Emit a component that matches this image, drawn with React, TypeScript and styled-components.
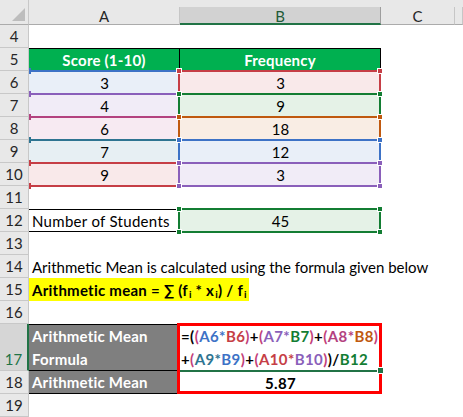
import React from 'react';
import styled, { createGlobalStyle, css } from 'styled-components';

type Tone = 'blue' | 'red' | 'purple' | 'green' | 'magenta' | 'orange' | 'teal';

const INK: Record<Tone, string> = {
  blue: '#3d72c6',
  red: '#c63e46',
  purple: '#8a5fba',
  green: '#137d33',
  magenta: '#b3427f',
  orange: '#c0590f',
  teal: '#2e7491',
};

const TINT: Record<Tone, string> = {
  blue: '#e9eff8',
  red: '#f9e9ea',
  purple: '#f1ecf7',
  green: '#e5f2e7',
  magenta: '#f7eaf2',
  orange: '#f9ede4',
  teal: '#e7eff3',
};

const PAREN = '#c2407a';
const XL_GREEN = '#217346';

const Global = createGlobalStyle`
  *, *::before, *::after { box-sizing: border-box; }
  html, body { margin: 0; padding: 0; background: #ffffff; }
  body { font-family: Lato, "Liberation Sans", sans-serif; }
`;

const Sheet = styled.div`
  display: grid;
  grid-template-columns: 29px 151px 201px 74px 8px;
  grid-template-rows: 25px repeat(13, 23px) 47px 23px 23px;
  width: 463px;
  height: 417px;
  overflow: hidden;
  font-size: 15px;
  color: #000;
  background: #fff;
`;

const Corner = styled.div`
  background: #e8e8e8;
  border-right: 1px solid #c8c8c8;
  border-bottom: 1px solid #ababab;
  position: relative;
`;

const CornerMark = styled.span`
  position: absolute;
  right: 3px;
  bottom: 3px;
  width: 13px;
  height: 13px;
  background: #bdbdbd;
  clip-path: polygon(100% 0, 100% 100%, 0 100%);
`;

const ColHead = styled.div`
  display: flex;
  padding-top: 7px;
  background: #e8e8e8;
`;

const ColLabel = styled.div<{ $sel?: boolean; $edge?: string }>`
  flex: 1;
  text-align: center;
  line-height: 18px;
  font-size: 15px;
  overflow: hidden;
  color: ${p => (p.$sel ? '#1f5a38' : '#262626')};
  background: ${p => (p.$sel ? '#d2d2d2' : '#e8e8e8')};
  border-right: 1px solid ${p => p.$edge ?? '#c6c6c6'};
  border-bottom: ${p => (p.$sel ? `2px solid ${XL_GREEN}` : '1px solid #ababab')};
`;

const RowHead = styled.div<{ $sel?: boolean }>`
  display: flex;
  justify-content: center;
  align-items: ${p => (p.$sel ? 'flex-end' : 'center')};
  line-height: 21px;
  font-size: 15px;
  color: ${p => (p.$sel ? XL_GREEN : '#262626')};
  background: ${p => (p.$sel ? '#d6d6d6' : '#e8e8e8')};
  border-bottom: 1px solid #c8c8c8;
  border-right: ${p => (p.$sel ? `2px solid ${XL_GREEN}` : '1px solid #c8c8c8')};
`;

const Cell = styled.div<{
  $center?: boolean;
  $bold?: boolean;
  $tint?: string;
  $span?: number;
  $marked?: boolean;
  $lines?: boolean;
  $track?: number;
}>`
  display: flex;
  align-items: center;
  justify-content: ${p => (p.$center ? 'center' : 'flex-start')};
  padding: 0 3px;
  min-width: 0;
  white-space: nowrap;
  font-weight: ${p => (p.$bold ? 700 : 400)};
  letter-spacing: ${p => (p.$track ? `${p.$track}px` : 'normal')};
  background: ${p => p.$tint ?? 'transparent'};
  ${p => p.$span && css`grid-column: span ${p.$span};`}
  ${p => p.$marked && css`position: relative;`}
  ${p =>
    p.$lines &&
    css`
      border-top: 1px solid #000;
      border-bottom: 1px solid #000;
    `}
`;

const HeadCell = styled.div`
  display: flex;
  align-items: center;
  justify-content: center;
  background: #00b050;
  color: #ffffff;
  font-weight: 700;
  letter-spacing: 0.2px;
  border-top: 1px solid #000;
  border-right: 1px solid #000;
`;

const Range = styled.span<{ $c: string; $clip?: boolean }>`
  position: absolute;
  top: -1px;
  bottom: -1px;
  left: ${p => (p.$clip ? '0' : '-2px')};
  right: 0;
  border: 2px solid ${p => p.$c};
  ${p => p.$clip && css`border-left-color: transparent;`}
  pointer-events: none;
`;

const Handle = styled.span<{ $c: string; $v: 'top' | 'bottom'; $h: 'left' | 'right'; $clip?: boolean }>`
  position: absolute;
  ${p => p.$v}: -4px;
  ${p => p.$h}: ${p => (p.$clip ? '-2px' : '-4px')};
  width: ${p => (p.$clip ? '2px' : '6px')};
  height: 6px;
  background: ${p => p.$c};
  border: ${p => (p.$clip ? 'none' : '1px solid #ffffff')};
`;

const NoteCell = styled.div`
  grid-column: span 2;
  display: flex;
  align-items: stretch;
`;

const Highlight = styled.div`
  display: flex;
  align-items: center;
  width: 220px;
  padding-left: 3px;
  background: #ffff00;
  font-weight: 700;
  letter-spacing: 0.25px;
  white-space: pre;
`;

const Sub = styled.span`
  font-size: 10px;
  position: relative;
  top: 4px;
  margin-left: 1px;
`;

const LabelCell = styled.div<{ $top?: boolean }>`
  display: flex;
  flex-direction: column;
  justify-content: center;
  padding: 0 3px;
  line-height: 23px;
  background: #7f7f7f;
  color: #ffffff;
  font-weight: 700;
  letter-spacing: 0.2px;
  white-space: nowrap;
  border-bottom: 1px solid #000;
  ${p => p.$top && css`border-top: 1px solid #000;`}
`;

const ResultBox = styled.div`
  grid-row: span 2;
  position: relative;
  display: flex;
  flex-direction: column;
`;

const FormulaCell = styled.div`
  flex: 0 0 47px;
  display: flex;
  flex-direction: column;
  justify-content: center;
  padding-left: 1px;
  line-height: 23px;
  font-weight: 700;
  letter-spacing: 0.4px;
  white-space: nowrap;
`;

const ValueCell = styled.div`
  flex: 1;
  display: flex;
  align-items: center;
  justify-content: center;
  font-weight: 700;
  letter-spacing: 0.3px;
`;

const RedFrame = styled.span`
  position: absolute;
  left: -3px;
  right: -1px;
  top: -1px;
  bottom: 0;
  border: 3px solid #ff0000;
  pointer-events: none;
`;

const ActiveEdge = styled.span`
  position: absolute;
  left: 0;
  right: 4px;
  top: 46px;
  height: 2px;
  background: ${XL_GREEN};
`;

const FillHandle = styled.span`
  position: absolute;
  right: -3px;
  top: 43px;
  width: 7px;
  height: 7px;
  background: ${XL_GREEN};
  border: 1px solid #ffffff;
`;

const Tok = styled.span<{ $c?: string }>`
  color: ${p => p.$c ?? '#000'};
`;

function Mark({ tone, clip }: { tone: Tone; clip?: boolean }) {
  const c = INK[tone];
  return (
    <Range $c={c} $clip={clip}>
      <Handle $c={c} $v="top" $h="left" $clip={clip} />
      <Handle $c={c} $v="top" $h="right" />
      <Handle $c={c} $v="bottom" $h="left" $clip={clip} />
      <Handle $c={c} $v="bottom" $h="right" />
    </Range>
  );
}

type T = [string, string?];

const line1: T[] = [
  ['='], ['('], ['(', PAREN], ['A6', INK.blue], ['*', INK.blue], ['B6', INK.red], [')', PAREN],
  ['+'], ['(', PAREN], ['A7', INK.purple], ['*', INK.purple], ['B7', INK.green], [')', PAREN],
  ['+'], ['(', PAREN], ['A8', INK.magenta], ['*', INK.magenta], ['B8', INK.orange], [')', PAREN],
];

const line2: T[] = [
  ['+'], ['(', PAREN], ['A9', INK.teal], ['*', INK.teal], ['B9', INK.blue], [')', PAREN],
  ['+'], ['(', PAREN], ['A10', INK.red], ['*', INK.red], ['B10', INK.purple], [')', PAREN],
  [')'], ['/'], ['B12', INK.green],
];

const data: { n: number; a: string; b: string; ta: Tone; tb: Tone }[] = [
  { n: 6, a: '3', b: '3', ta: 'blue', tb: 'red' },
  { n: 7, a: '4', b: '9', ta: 'purple', tb: 'green' },
  { n: 8, a: '6', b: '18', ta: 'magenta', tb: 'orange' },
  { n: 9, a: '7', b: '12', ta: 'teal', tb: 'blue' },
  { n: 10, a: '9', b: '3', ta: 'red', tb: 'purple' },
];

function Blank({ n }: { n: number }) {
  return (
    <>
      <RowHead>{n}</RowHead>
      <Cell />
      <Cell />
      <Cell />
      <Cell />
    </>
  );
}

function Line({ toks }: { toks: T[] }) {
  return (
    <div>
      {toks.map(([t, c], i) => (
        <Tok key={i} $c={c}>
          {t}
        </Tok>
      ))}
    </div>
  );
}

export default function App() {
  return (
    <>
      <Global />
      <Sheet>
        <Corner>
          <CornerMark />
        </Corner>
        <ColHead>
          <ColLabel>A</ColLabel>
        </ColHead>
        <ColHead>
          <ColLabel $sel $edge="#9e9e9e">B</ColLabel>
        </ColHead>
        <ColHead>
          <ColLabel>C</ColLabel>
        </ColHead>
        <ColHead>
          <ColLabel />
        </ColHead>

        <Blank n={4} />

        <RowHead>5</RowHead>
        <HeadCell>Score (1-10)</HeadCell>
        <HeadCell>Frequency</HeadCell>
        <Cell />
        <Cell />

        {data.map(r => (
          <React.Fragment key={r.n}>
            <RowHead>{r.n}</RowHead>
            <Cell $center $marked $tint={TINT[r.ta]}>
              {r.a}
              <Mark tone={r.ta} clip />
            </Cell>
            <Cell $center $marked $tint={TINT[r.tb]}>
              {r.b}
              <Mark tone={r.tb} />
            </Cell>
            <Cell />
            <Cell />
          </React.Fragment>
        ))}

        <Blank n={11} />

        <RowHead>12</RowHead>
        <Cell $lines $track={0.3}>Number of Students</Cell>
        <Cell $center $marked $tint={TINT.green}>
          45
          <Mark tone="green" />
        </Cell>
        <Cell />
        <Cell />

        <Blank n={13} />

        <RowHead>14</RowHead>
        <Cell $span={4}>Arithmetic Mean is calculated using the formula given below</Cell>

        <RowHead>15</RowHead>
        <NoteCell>
          <Highlight>
            Arithmetic mean = ∑ (f<Sub>i</Sub> * x<Sub>i</Sub>) / f<Sub>i</Sub>
          </Highlight>
        </NoteCell>
        <Cell />
        <Cell />

        <Blank n={16} />

        <RowHead $sel>17</RowHead>
        <LabelCell $top>
          <span>Arithmetic Mean</span>
          <span>Formula</span>
        </LabelCell>
        <ResultBox>
          <FormulaCell>
            <Line toks={line1} />
            <Line toks={line2} />
          </FormulaCell>
          <ValueCell>5.87</ValueCell>
          <RedFrame />
          <ActiveEdge />
          <FillHandle />
        </ResultBox>
        <Cell />
        <Cell />

        <RowHead>18</RowHead>
        <LabelCell>
          <span>Arithmetic Mean</span>
        </LabelCell>
        <Cell />
        <Cell />

        <Blank n={19} />
      </Sheet>
    </>
  );
}
